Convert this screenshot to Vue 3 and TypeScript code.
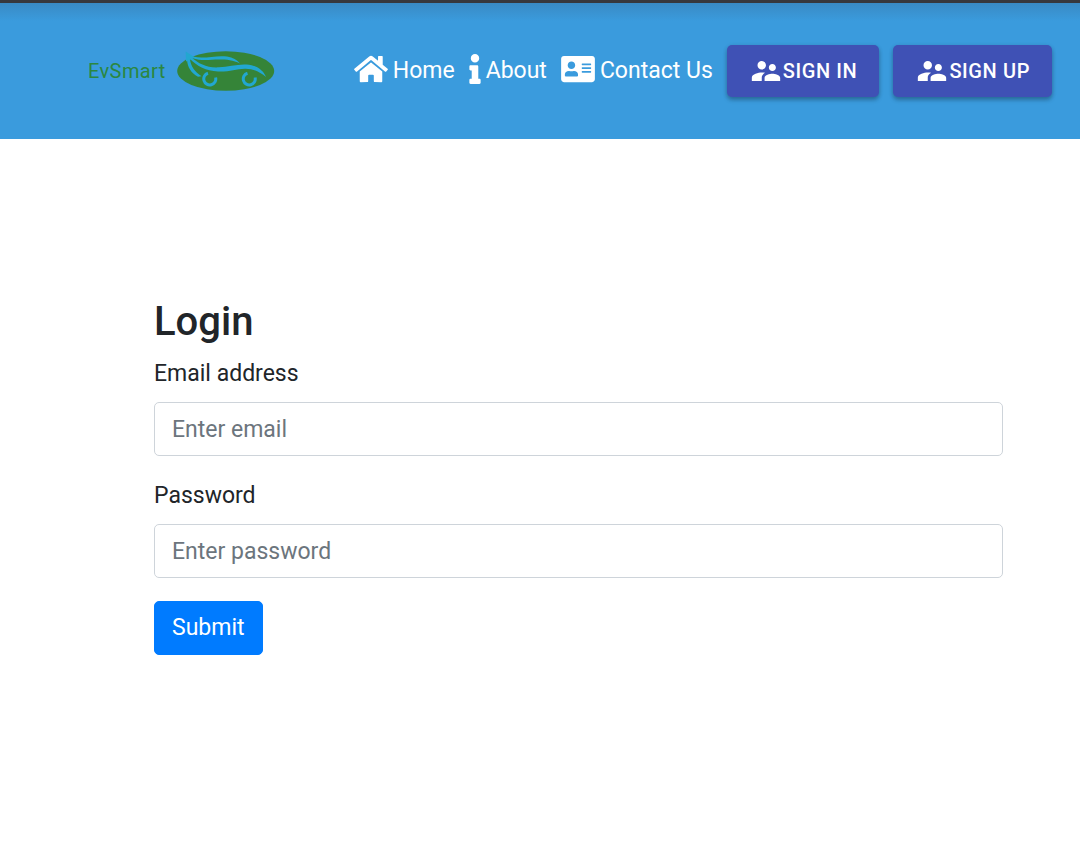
<script setup lang="ts">
import { ref } from 'vue'

const email = ref('')
const password = ref('')
const accountActions = ['Sign In', 'Sign Up']
</script>

<template>
  <div class="page">
    <header class="bar">
      <a class="brand" href="#">
        <span>EvSmart</span>
        <svg class="logo" viewBox="0 0 98 42" aria-hidden="true">
          <ellipse cx="48.700" cy="21" rx="48.500" ry="19.700" fill="#358438" />
          <g fill="#22a7d0">
            <path d="M8.700 1.500 L18 7.500 L9 11.500 Z" />
            <path d="M16 6.500 C27 9.500 38 5 50 6.500 C56 7.500 60 10 63 13.500 C56 10 50 9.500 42 9.500 C33 9.500 25 11.500 15 8 Z" />
            <path d="M14 7 C22 14 30 18 42 17.300 C54 16.600 66 12 77 16 C83 18 87 22 89 27 C83 22 76 18.500 68 18.700 C59 19 52 22 41 21.500 C29 21 20 16 13 9 Z" />
            <path d="M13 9 C13.500 16 18 22 24.500 26.300 L21 26.800 C14 23 10.500 17 10 10 Z" />
          </g>
          <path d="M31 23.200 A6 6 0 1 0 38.600 27.500 M70.500 23.200 A6 6 0 1 0 78.100 27.500" fill="none" stroke="#22a7d0" stroke-width="3" />
        </svg>
      </a>
      <nav class="links">
        <a class="link" href="#">
          <svg width="34" height="30" viewBox="0 0 576 512" aria-hidden="true"><path fill="currentColor" d="M280.4 148.3 96 300.1V464a16 16 0 0 0 16 16l112.1-.3a16 16 0 0 0 15.9-16V368a16 16 0 0 1 16-16h64a16 16 0 0 1 16 16v95.6a16 16 0 0 0 16 16.1L464 480a16 16 0 0 0 16-16V300L295.7 148.3a12.2 12.2 0 0 0-15.3 0zM571.6 251.5 488 182.6V44a12 12 0 0 0-12-12h-56a12 12 0 0 0-12 12v72.6L318.5 43a48 48 0 0 0-61 0L4.3 251.5a12 12 0 0 0-1.6 16.9l25.5 31a12 12 0 0 0 16.9 1.6l235.3-193.7a12.2 12.2 0 0 1 15.3 0L530.9 301a12 12 0 0 0 16.9-1.6l25.5-31a12 12 0 0 0-1.7-16.9z" /></svg>
          <span>Home</span>
        </a>
        <a class="link" href="#">
          <svg width="12" height="30" viewBox="0 0 192 512" aria-hidden="true"><path fill="currentColor" d="M20 424.2h20V279.8H20c-11 0-20-9-20-20V212c0-11 9-20 20-20h112c11 0 20 9 20 20v212.2h20c11 0 20 9 20 20V492c0 11-9 20-20 20H20c-11 0-20-9-20-20v-47.8c0-11 9-20 20-20zM96 0C56.2 0 24 32.2 24 72s32.2 72 72 72 72-32.2 72-72S135.8 0 96 0z" /></svg>
          <span>About</span>
        </a>
        <a class="link" href="#">
          <svg width="34" height="30" viewBox="0 0 576 512" aria-hidden="true"><path fill="currentColor" d="M528 32H48C21.500 32 0 53.500 0 80v352c0 26.500 21.500 48 48 48h480c26.500 0 48-21.500 48-48V80c0-26.500-21.500-48-48-48zM176 128c35.300 0 64 28.700 64 64s-28.700 64-64 64-64-28.700-64-64 28.700-64 64-64zm112 236.800c0 10.600-10 19.200-22.400 19.200H86.400C74 384 64 375.400 64 364.800v-19.200c0-31.800 30.100-57.600 67.200-57.600h5a103 103 0 0 0 79.600 0h5c37.100 0 67.200 25.800 67.200 57.600zM512 312c0 4.400-3.600 8-8 8H360c-4.400 0-8-3.600-8-8v-16c0-4.400 3.600-8 8-8h144c4.400 0 8 3.600 8 8zm0-64c0 4.400-3.600 8-8 8H360c-4.400 0-8-3.600-8-8v-16c0-4.400 3.600-8 8-8h144c4.400 0 8 3.600 8 8zm0-64c0 4.400-3.600 8-8 8H360c-4.400 0-8-3.600-8-8v-16c0-4.400 3.600-8 8-8h144c4.400 0 8 3.600 8 8z" /></svg>
          <span>Contact Us</span>
        </a>
        <button v-for="label in accountActions" :key="label" class="account" type="button">
          <svg width="34" height="34" viewBox="0 0 24 24" aria-hidden="true"><path fill="currentColor" d="M16.500 12c1.380 0 2.490-1.120 2.490-2.500S17.880 7 16.500 7C15.120 7 14 8.120 14 9.500s1.120 2.500 2.500 2.500zM9 11c1.660 0 2.990-1.340 2.990-3S10.660 5 9 5C7.340 5 6 6.340 6 8s1.340 3 3 3zm7.500 3c-1.830 0-5.500.92-5.500 2.750V19h11v-2.250c0-1.830-3.670-2.750-5.500-2.750zM9 13c-2.330 0-7 1.170-7 3.500V19h7v-2.250c0-.85.33-2.340 2.370-3.470C10.500 13.100 9.660 13 9 13z" /></svg>
          <span>{{ label }}</span>
        </button>
      </nav>
    </header>

    <main>
      <form class="login" @submit.prevent>
        <h1>Login</h1>
        <div class="field">
          <label for="email">Email address</label>
          <input id="email" v-model="email" type="email" placeholder="Enter email" />
        </div>
        <div class="field">
          <label for="password">Password</label>
          <input id="password" v-model="password" type="password" placeholder="Enter password" />
        </div>
        <button class="submit" type="submit">Submit</button>
      </form>
    </main>
  </div>
</template>

<style>
body {
  margin: 0;
  background: #fff;
}
</style>

<style scoped>
* {
  box-sizing: border-box;
}
.page {
  color: #212529;
  font: 400 23px/34px Roboto, "Liberation Sans", sans-serif;
}
.bar {
  display: flex;
  align-items: center;
  justify-content: space-between;
  padding: 42px 28px 42px 88px;
  border-top: 3px solid #37383d;
  background: linear-gradient(#398ac4, #3a9bdd 18px);
}
.brand {
  display: flex;
  align-items: center;
  gap: 11px;
  color: #2b8740;
  font-size: 20px;
  letter-spacing: 0.02em;
  text-decoration: none;
}
.logo {
  width: 98px;
  height: 42px;
}
.links {
  display: flex;
  align-items: center;
  gap: 14px;
}
.link {
  display: flex;
  align-items: center;
  gap: 5px;
  color: #fff;
  text-decoration: none;
  white-space: nowrap;
}
.link svg {
  margin-bottom: 4px;
}
.account {
  display: flex;
  align-items: center;
  padding: 9px 22px;
  border: 0;
  border-radius: 5px;
  background: #3f51b5;
  box-shadow: 0 3px 4px rgba(0, 0, 0, 0.25), 0 1px 5px rgba(0, 0, 0, 0.1);
  color: #fff;
  font: 500 20px/34px Roboto, "Liberation Sans", sans-serif;
  letter-spacing: 0.03em;
  text-transform: uppercase;
  white-space: nowrap;
}
.login {
  padding: 160px 77px 48px 154px;
}
h1 {
  margin: 0 0 12px;
  font-size: 40px;
  font-weight: 500;
  line-height: 46px;
}
.field {
  margin-bottom: 23px;
}
label {
  display: block;
  margin-bottom: 11px;
}
input {
  display: block;
  width: 100%;
  height: 54px;
  padding: 0 17px;
  border: 1px solid #ced4da;
  border-radius: 5px;
  background: #fff;
  color: #495057;
  font: inherit;
}
input::placeholder {
  color: #6c757d;
  opacity: 1;
}
.submit {
  height: 54px;
  padding: 0 17px;
  border: 1px solid #007bff;
  border-radius: 5px;
  background: #007bff;
  color: #fff;
  font: inherit;
}
</style>
